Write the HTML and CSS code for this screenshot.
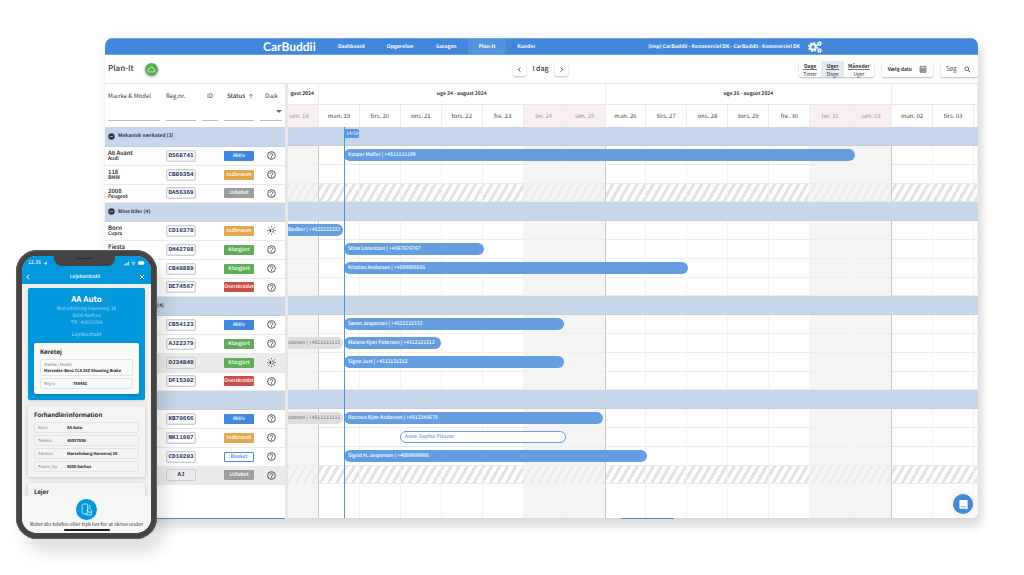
FILE: index.html
```html
<!DOCTYPE html>
<html lang="da">
<head>
<meta charset="utf-8">
<title>CarBuddii Plan-It</title>
<link rel="stylesheet" href="styles.css">
</head>
<body>
<svg class="defs" aria-hidden="true">
  <symbol id="help" viewBox="0 0 24 24"><circle cx="12" cy="12" r="10.3" fill="none" stroke="currentColor" stroke-width="2.2"/><path d="M8.6 9.6a3.4 3.4 0 1 1 5.2 2.9c-1.2.8-1.8 1.3-1.8 2.6" fill="none" stroke="currentColor" stroke-width="2.2"/><circle cx="12" cy="18" r="1.5"/></symbol>
  <symbol id="sun" viewBox="0 0 24 24"><path d="M11 7.500a4.500 4.500 0 0 0 0 9z"/><path d="M13 7.500a4.500 4.500 0 0 1 0 9M12 0v3.500M12 20.500V24M0 12h4M20 12h4M3 3.500l3.500 3.500M17.500 17l3.500 3.500M3 20.500L6.500 17M17.500 7l3.500-3.500" fill="none" stroke="currentColor" stroke-width="1.800"/></symbol>
  <symbol id="minus" viewBox="0 0 24 24"><circle cx="12" cy="12" r="11"/><path d="M7 12h10" stroke="#c5d7e8" stroke-width="2.500"/></symbol>
</svg>
<main class="app">
  <header class="topbar">
    <a class="logo" href="#">CarBuddii</a>
    <nav class="nav">
      <a href="#">Dashboard</a><a href="#">Opgørelser</a><a href="#">Garagen</a><a class="active" href="#">Plan-It</a><a href="#">Kunder</a>
    </nav>
    <span class="company">(Imp) CarBuddii - Kommerciel DK - CarBuddii - Kommerciel DK</span>
    <button class="gears" aria-label="Indstillinger"><svg viewBox="0 0 28 24"><g fill="none" stroke="#fff"><circle cx="10" cy="12" r="5.500" stroke-width="4"/><circle cx="10" cy="12" r="8.500" stroke-width="3" stroke-dasharray="3.700 2.970"/><circle cx="23" cy="5" r="2.700" stroke-width="2.200"/><circle cx="23" cy="5" r="4.300" stroke-width="1.500" stroke-dasharray="1.900 1.470"/><circle cx="23" cy="19" r="2.700" stroke-width="2.200"/><circle cx="23" cy="19" r="4.300" stroke-width="1.500" stroke-dasharray="1.900 1.470"/></g></svg></button>
  </header>

  <div class="toolbar">
    <div class="toolbar-left">
      <h1>Plan-It</h1>
      <button class="cloud" aria-label="Synkroniseret"><svg viewBox="0 0 24 24"><path d="M7 18.500a4.500 4.500 0 0 1-.5-9 6 6 0 0 1 11.500 1.500 3.800 3.800 0 0 1-.5 7.500z" fill="none" stroke="#fff" stroke-width="2"/></svg></button>
    </div>
    <div class="pager">
      <button aria-label="Forrige"><svg viewBox="0 0 24 24"><path d="M15 5l-7 7 7 7"/></svg></button>
      <span>I dag</span>
      <button aria-label="Næste"><svg viewBox="0 0 24 24"><path d="M9 5l7 7-7 7"/></svg></button>
    </div>
    <div class="toolbar-right">
      <div class="segments">
        <button><span>Dage</span><span>Timer</span></button>
        <button class="selected"><span>Uger</span><span>Dage</span></button>
        <button><span>Måneder</span><span>Uger</span></button>
      </div>
      <button class="date-button">Vælg dato <svg viewBox="0 0 24 24"><path d="M3 5h18v17H3zM3 9.500h18M7 1.500V5M17 1.500V5M3 14h18M3 18h18M9 10v12M15 10v12" fill="none" stroke="currentColor" stroke-width="1.600"/></svg></button>
      <label class="search"><input type="text" placeholder="Søg" aria-label="Søg"><svg viewBox="0 0 24 24"><circle cx="9.500" cy="9.500" r="6.500" fill="none" stroke="currentColor" stroke-width="2.500"/><path d="M14.500 14.500l7 7" stroke="currentColor" stroke-width="3"/></svg></label>
    </div>
  </div>

  <div class="planner">
    <section class="cars">
      <table>
        <colgroup><col class="c-model"><col class="c-reg"><col class="c-id"><col class="c-status"><col class="c-tyre"></colgroup>
        <thead>
          <tr>
            <th><label for="f1">Mærke &amp; Model</label><input id="f1" type="text"></th>
            <th><label for="f2">Reg.nr.</label><input id="f2" type="text"></th>
            <th><label class="inset" for="f3">ID</label><input id="f3" type="text"></th>
            <th class="sorted"><label class="near" for="f4">Status <svg viewBox="0 0 24 24"><path d="M12 22V4M5 11l7-7 7 7" fill="none" stroke="currentColor" stroke-width="2"/></svg></label><input id="f4" type="text"></th>
            <th><label class="inset" for="f5">Dæk</label><span class="picker"><select id="f5"><option></option></select></span></th>
          </tr>
        </thead>
        <tbody>
          <tr class="group"><td colspan="5"><div><svg><use href="#minus"/></svg>Mekanisk værksted (3)</div></td></tr>
          <tr><td><b>A6 Avant</b><small>Audi</small></td><td><span class="plate">DS68741</span></td><td></td><td><span class="badge blue">Aktiv</span></td><td><svg><use href="#help"/></svg></td></tr>
          <tr><td><b>118</b><small>BMW</small></td><td><span class="plate">CB89354</span></td><td></td><td><span class="badge orange">Indleveret</span></td><td><svg><use href="#help"/></svg></td></tr>
          <tr><td><b>2008</b><small>Peugeot</small></td><td><span class="plate">DA56369</span></td><td></td><td><span class="badge grey">Udløbet</span></td><td><svg><use href="#help"/></svg></td></tr>
          <tr class="group"><td colspan="5"><div><svg><use href="#minus"/></svg>Mine biler (4)</div></td></tr>
          <tr><td><b>Born</b><small>Cupra</small></td><td><span class="plate">CD10378</span></td><td></td><td><span class="badge orange">Indleveret</span></td><td><svg><use href="#sun"/></svg></td></tr>
          <tr><td><b>Fiesta</b><small>&nbsp;</small></td><td><span class="plate">DH42708</span></td><td></td><td><span class="badge green">Klargjort</span></td><td><svg><use href="#help"/></svg></td></tr>
          <tr><td></td><td><span class="plate">CB48889</span></td><td></td><td><span class="badge green">Klargjort</span></td><td><svg><use href="#help"/></svg></td></tr>
          <tr><td></td><td><span class="plate">DE74567</span></td><td></td><td><span class="badge red">Overskredet</span></td><td><svg><use href="#help"/></svg></td></tr>
          <tr class="group tail"><td colspan="5"><div>(4)</div></td></tr>
          <tr><td></td><td><span class="plate">CB54123</span></td><td></td><td><span class="badge blue">Aktiv</span></td><td><svg><use href="#help"/></svg></td></tr>
          <tr><td></td><td><span class="plate">AJ22379</span></td><td></td><td><span class="badge green">Klargjort</span></td><td><svg><use href="#help"/></svg></td></tr>
          <tr class="hover"><td></td><td><span class="plate">OJ34849</span></td><td></td><td><span class="badge green">Klargjort</span></td><td><svg><use href="#sun"/></svg></td></tr>
          <tr><td></td><td><span class="plate">DF15302</span></td><td></td><td><span class="badge red">Overskredet</span></td><td><svg><use href="#help"/></svg></td></tr>
          <tr class="group"><td colspan="5"></td></tr>
          <tr><td></td><td><span class="plate">KB70666</span></td><td></td><td><span class="badge blue">Aktiv</span></td><td><svg><use href="#help"/></svg></td></tr>
          <tr><td></td><td><span class="plate">NK11007</span></td><td></td><td><span class="badge orange">Indleveret</span></td><td><svg><use href="#help"/></svg></td></tr>
          <tr><td></td><td><span class="plate">CD10203</span></td><td></td><td><span class="badge outline">Booket</span></td><td><svg><use href="#help"/></svg></td></tr>
          <tr class="hover"><td></td><td><span class="plate">AJ</span></td><td></td><td><span class="badge grey">Udløbet</span></td><td><svg><use href="#help"/></svg></td></tr>
        </tbody>
      </table>
      <div class="scroll-line"></div>
    </section>

    <section class="timeline">
      <div class="weeks"><span class="cut">gust 2024</span><span>uge 34 - august 2024</span><span>uge 35 - august 2024</span><span></span></div>
      <div class="days">
        <span class="off cut">søn. 18</span><span>man. 19</span><span>tirs. 20</span><span>ons. 21</span><span>tors. 22</span><span>fre. 23</span><span class="off">lør. 24</span><span class="off">søn. 25</span><span>man. 26</span><span>tirs. 27</span><span>ons. 28</span><span>tors. 29</span><span>fre. 30</span><span class="off">lør. 31</span><span class="off">søn. 01</span><span>man. 02</span><span>tirs. 03</span><span></span>
      </div>
      <div class="chart">
        <div class="columns"><i class="off end"></i><i></i><i></i><i></i><i></i><i></i><i class="off"></i><i class="off end"></i><i></i><i></i><i></i><i></i><i></i><i class="off"></i><i class="off end"></i><i></i><i></i><i></i></div>
        <div class="rows">
          <div class="row group"></div>
          <div class="row"><div class="bar" style="margin-left:8.1%;width:74.1%">Kasper Møller | +4511111199</div></div>
          <div class="row"></div>
          <div class="row striped"></div>
          <div class="row group"></div>
          <div class="row"><div class="bar cut" style="width:8%">Bødker | +4522222222</div></div>
          <div class="row"><div class="bar" style="margin-left:8.1%;width:20.3%">Stine Lorentzen | +4567676767</div></div>
          <div class="row"><div class="bar" style="margin-left:8.1%;width:49.9%">Kristian Andersen | +4599999555</div></div>
          <div class="row"></div>
          <div class="row group"></div>
          <div class="row"><div class="bar" style="margin-left:8.1%;width:31.9%">Søren Jespersen | +4522222333</div></div>
          <div class="row"><div class="bar cut past" style="width:8%">ustesen | +4511111111</div><div class="bar" style="margin-left:.1%;width:14.1%">Malene Kjær Petersen | +4512121212</div></div>
          <div class="row"><div class="bar" style="margin-left:8.1%;width:31.9%">Signe Just | +4512121212</div></div>
          <div class="row"></div>
          <div class="row group"></div>
          <div class="row"><div class="bar cut past" style="width:8%">ustesen | +4511111111</div><div class="bar" style="margin-left:.1%;width:37.5%">Rasmus Kjær Andersen | +4512345678</div></div>
          <div class="row"><div class="bar draft" style="margin-left:16.2%;width:24.1%">Anne-Sophie Plesner</div></div>
          <div class="row"><div class="bar" style="margin-left:8.1%;width:43.9%">Sigrid H. Jespersen | +4599999998</div></div>
          <div class="row striped"></div>
        </div>
        <div class="now" style="left:8.1%"><span>14:50</span></div>
      </div>
      <div class="scroll-track"><div class="scroll-thumb"></div></div>
    </section>
  </div>
  <button class="chat" aria-label="Chat"><svg viewBox="0 0 24 24"><path d="M5 2h14a2 2 0 0 1 2 2v19l-4-2H5a2 2 0 0 1-2-2V4a2 2 0 0 1 2-2z" fill="#fff"/><path d="M6.500 15.500q5.500 4 11 0" fill="none" stroke="#4287d9" stroke-width="1.500"/></svg></button>
</main>

<aside class="phone">
  <div class="screen">
    <header class="phone-head">
      <div class="status"><span>12.35 <svg viewBox="0 0 24 24"><path d="M2 12L21 3l-8 18-2-8z" fill="#fff"/></svg></span><span class="signals"><svg viewBox="0 0 24 24"><path d="M1 15h4v6H1zM7 12h4v9H7zM13 8h4v13h-4zM19 4h4v17h-4z" fill="#fff"/></svg><svg viewBox="0 0 24 24"><path d="M2 9q10-8 20 0M6 14q6-5 12 0" fill="none" stroke="#fff" stroke-width="3"/><circle cx="12" cy="18.500" r="2.500" fill="#fff"/></svg><svg class="wide" viewBox="0 0 30 24"><rect x="1" y="5" width="25" height="14" rx="4" fill="#fff"/><path d="M28.500 10v4" stroke="#fff" stroke-width="2"/></svg></span></div>
      <div class="title"><button aria-label="Tilbage"><svg viewBox="0 0 24 24"><path d="M16 3l-9 9 9 9"/></svg></button><span>Lejekontrakt</span><button aria-label="Luk"><svg viewBox="0 0 24 24"><path d="M4 4l16 16M20 4L4 20"/></svg></button></div>
    </header>
    <div class="contract">
      <section class="dealer">
        <h2>AA Auto</h2>
        <p>Marselisborg Havnevej 38<br>8000 Aarhus<br>Tlf.: 40937096</p>
        <p class="kind">Lejekontrakt</p>
        <div class="card">
          <h3>Køretøj</h3>
          <div class="field stacked"><span>Mærke / Model</span><b>Mercedes-Benz CLS 250 Shooting Brake</b></div>
          <div class="field"><span>Reg nr.</span><b>798465</b></div>
        </div>
      </section>
      <section class="card info">
        <h3>Forhandlerinformation</h3>
        <div class="field"><span>Navn</span><b>AA Auto</b></div>
        <div class="field"><span>Telefon</span><b>40937096</b></div>
        <div class="field"><span>Adresse</span><b>Marselisborg Havnevej 38</b></div>
        <div class="field"><span>Postnr./by</span><b>8000 Aarhus</b></div>
      </section>
      <section class="card info"><h3>Lejer</h3></section>
    </div>
    <footer class="sign">
      <button aria-label="Roter"><svg viewBox="0 0 24 24"><g fill="none" stroke="#fff" stroke-width="1.300"><rect x="4" y="2" width="10" height="18" rx="2"/><path d="M14 9h3l4 4v8a1 1 0 0 1-1 1h-9v-2M16 4q3 0 3 4M12 14q3-1 4 3h4"/></g></svg></button>
      <span>Roter din telefon eller tryk her for at skrive under</span>
      <i></i>
    </footer>
  </div>
  <div class="notch"></div>
</aside>
</body>
</html>
```
FILE: styles.css
```css
* { box-sizing: border-box; }

body {
  margin: 0;
  min-height: 100vh;
  background: #fff;
  color: #333;
  font: 6px/8px "Noto Sans CJK JP", "Noto Sans", sans-serif;
  text-rendering: geometricPrecision;
  position: relative;
  overflow: hidden;
}

button, input, select {
  font: inherit;
  color: inherit;
  border: 0;
  padding: 0;
  margin: 0;
  background: none;
  min-width: 0;
}

a { color: inherit; text-decoration: none; }
svg { display: block; fill: currentColor; }
.defs { display: none; }
h1, h2, h3, p { margin: 0; }

/* Application window */
.app {
  position: relative;
  margin: 38px 46px 0 105px;
  background: #fff;
  border-radius: 8px;
  overflow: clip;
  box-shadow: 4px 8px 10px rgba(0, 0, 0, .12), 0 0 14px rgba(0, 0, 0, .05);
}

.topbar {
  display: flex;
  align-items: center;
  height: 17px;
  padding: 0 156px 0 158px;
  background: #4287d9;
  border-top: 1px solid #71a4e2;
  border-bottom: 1px solid #71a4e2;
  color: #fff;
  font-size: 5px;
  font-weight: 700;
  white-space: nowrap;
}

.logo { font: 700 12px/14px Lato, sans-serif; width: 64px; }
.nav { display: flex; align-self: stretch; }
.nav a { display: flex; align-items: center; padding: 0 11px; }
.nav .active { background: #5393dd; }
.company { margin-left: auto; }
.gears { margin-left: 8px; }
.gears svg { width: 14px; height: 12px; }

.toolbar {
  display: grid;
  grid-template-columns: 1fr auto 1fr;
  align-items: center;
  height: 29px;
  border-bottom: 1px solid #e4e4e4;
}

.toolbar-left { display: flex; align-items: center; gap: 11px; padding-left: 3px; }
h1 { font-size: 8px; line-height: 12px; font-weight: 500; color: #2f3542; }
.cloud { width: 13px; height: 13px; border-radius: 50%; background: #5aad54; display: grid; place-items: center; box-shadow: 0 1px 3px rgba(0, 0, 0, .3); }
.cloud svg { width: 9px; height: 9px; }

.pager { display: flex; align-items: center; gap: 6px; padding-right: 2px; font-size: 7px; font-weight: 500; }
.pager button { width: 13px; height: 13px; display: grid; place-items: center; border-radius: 2px; box-shadow: 0 1px 2px rgba(0, 0, 0, .25); }
.pager svg { width: 7px; height: 7px; fill: none; stroke: #222; stroke-width: 3; }

.toolbar-right { display: flex; justify-content: flex-end; gap: 8px; font-size: 5px; }
.segments, .date-button, .search { height: 16px; border-radius: 2px; box-shadow: 0 1px 2px rgba(0, 0, 0, .28); }
.segments { display: flex; }
.segments button { display: flex; flex-direction: column; justify-content: center; min-width: 22px; padding: 0 4px; line-height: 7px; }
.segments button + button { border-left: 1px solid #e8e8e8; }
.segments span:first-child { border-bottom: 1px solid #777; font-weight: 700; }
.segments .selected { background: #e3eaf2; }
.date-button { display: flex; align-items: center; gap: 7px; padding: 0 6px; font-weight: 700; }
.date-button svg { width: 8px; height: 8px; }
.search { display: flex; align-items: center; width: 37px; padding: 0 7px 0 5px; font-size: 6px; }
.search input { flex: 1; width: 10px; }
.search input::placeholder { color: #555; opacity: 1; }
.search svg { width: 7px; height: 7px; }

/* Planner */
.planner { display: flex; }
.cars { display: flex; flex-direction: column; width: 183px; flex: none; border-right: 3px solid #e6e6e6; }
table { width: 180px; table-layout: fixed; border-collapse: collapse; }
.c-model { width: 58px; }
.c-reg, .c-status { width: 36px; }
.c-id { width: 22px; }
.c-tyre { width: 28px; }
th { height: 43px; padding: 8px 3px 6px; text-align: left; vertical-align: top; font-weight: 400; white-space: nowrap; }
th label { display: flex; align-items: center; gap: 3px; }
th label svg { width: 6px; height: 6px; }
th label.inset { padding-left: 5px; }
th label.near { padding-left: 3px; }
th input, .picker { display: block; width: 100%; height: 13px; margin-top: 8px; border-bottom: 1px solid #bbb; }
th.sorted { font-weight: 500; }
.picker { position: relative; }
.picker select { width: 100%; height: 12px; appearance: none; }
.picker::after { content: ""; position: absolute; right: 0; top: 2px; border: 3px solid transparent; border-top-color: #666; border-bottom: 0; }

tbody tr { height: 19px; border-bottom: 1px solid #eaeaea; }
tbody tr:has(+ .group), tbody tr:last-child { height: 18px; }
tbody tr.group { background: #c5d7e8; border-bottom-color: #c5cdd5; }
.group div { display: flex; align-items: center; gap: 3px; color: #2f3542; font-size: 5px; font-weight: 700; }
.group svg { width: 7px; height: 7px; }
.tail div { padding-left: 49px; }
tr.hover { background: #ebebeb; }
td { padding: 0 3px; }
td b, td small { display: block; font-size: 6px; line-height: 7px; font-weight: 500; color: #111; }
td small { font-size: 5px; line-height: 6px; }
td > svg { width: 9px; height: 9px; margin-left: 7px; }

.plate {
  display: block;
  height: 12px;
  border: 1px solid #cfcfcf;
  box-shadow: inset 0 0 0 1px #ececec;
  border-radius: 2px;
  font: 700 6px/10px "Liberation Mono", monospace;
  text-align: center;
  color: #1c3766;
}

.badge { display: block; height: 10px; border-radius: 1px; font-size: 5px; line-height: 10px; font-weight: 500; text-align: center; color: #fff; white-space: nowrap; }
.blue { background: #4287d9; }
.orange { background: #e4a64e; }
.green { background: #5fad56; }
.red { background: #c94f48; }
.grey { background: #9d9d9d; }
.outline { border: 1px solid #4287d9; line-height: 8px; color: #4287d9; background: #fff; }
.scroll-line { margin-top: auto; height: 1px; background: #4287d9; }

/* Timeline */
.timeline { flex: 1; min-width: 0; }
.weeks { display: grid; grid-template-columns: 31fr 287fr 287fr 86fr; height: 21px; font-size: 5px; line-height: 20px; font-weight: 700; text-align: center; white-space: nowrap; border-bottom: 1px solid #e8e8e8; }
.weeks span { min-width: 0; border-right: 1px solid #eee; }
.weeks .cut { text-align: right; padding-right: 4px; }
.days, .columns { display: grid; grid-template-columns: 31fr repeat(16, 41fr) 4fr; }
.days { height: 22px; line-height: 21px; text-align: center; color: #444; white-space: nowrap; }
.days span { border-right: 1px solid #eee; }
.days .cut { text-align: left; padding-left: 1px; }
.days .off { background: #f9efef; color: #999; }

.chart { position: relative; display: grid; height: 391px; }
.columns, .rows { grid-area: 1 / 1; min-width: 0; }
.columns { z-index: 1; }
.columns i { border-right: 1px solid #f3f3f3; }
.columns .off { background: rgba(241, 241, 241, .7); }
.columns .end { border-right-color: #c8c8c8; }
.row { display: flex; align-items: center; height: 19px; border-bottom: 1px solid #ececec; }
.row:has(+ .group), .row:last-child { height: 18px; }
.row.group { position: relative; z-index: 2; background: #c5d7e8; border-bottom-color: #c5cdd5; }
.striped { background: repeating-linear-gradient(120deg, #e3e3e3 0 3px, #fff 3px 7px); }

.bar {
  position: relative;
  z-index: 2;
  flex: none;
  height: 12px;
  padding: 0 4px;
  border-radius: 6px;
  background: #669de0;
  color: #fff;
  font-size: 5px;
  line-height: 12px;
  font-weight: 500;
  white-space: nowrap;
}
.bar.cut { display: flex; justify-content: flex-end; overflow: hidden; padding: 0 3px 0 0; border-radius: 0 6px 6px 0; }
.past { background: #dedede; color: #888; }
.draft { background: #fff; border: 1px solid #669de0; line-height: 10px; color: #669de0; }

.now { position: absolute; z-index: 3; top: 0; bottom: 0; border-left: 1px solid #4f94de; }
.now span { display: block; margin-top: 2px; padding: 0 1px; border-radius: 0 2px 2px 0; background: #5596dd; color: #fff; font-size: 5px; line-height: 9px; }
.scroll-track { height: 1px; padding: 0 304px 0 333px; background: #d8d8d8; }
.scroll-thumb { height: 1px; background: #4287d9; }

.chat { position: absolute; right: 5px; bottom: 5px; width: 20px; height: 20px; display: grid; place-items: center; border-radius: 50%; background: #4287d9; box-shadow: 0 0 8px rgba(0, 0, 0, .12); }
.chat svg { width: 11px; height: 11px; }

/* Phone */
.phone {
  position: absolute;
  left: 16px;
  top: 250px;
  z-index: 5;
  width: 141px;
  padding: 6px;
  border-radius: 21px;
  background: #444;
  box-shadow: inset 0 0 0 1px #5c5c5c, 8px 14px 16px rgba(0, 0, 0, .12);
}
.screen { height: 277px; display: flex; flex-direction: column; overflow: hidden; border-radius: 15px; background: #f1f1f1; }
.notch { position: absolute; left: 38px; top: 5px; width: 61px; height: 11px; border-radius: 0 0 8px 8px; background: #444; }
.notch::after { content: ""; position: absolute; left: 23px; top: 3px; width: 15px; height: 1px; background: #2c2c2c; }
.phone-head { flex: none; height: 28px; padding: 3px 6px 0; background: #0398dc; color: #fff; }
.status, .title, .signals, .status span { display: flex; align-items: center; }
.status, .title { justify-content: space-between; }
.status { font-size: 5px; line-height: 8px; font-weight: 500; }
.status > span { gap: 2px; }
.status svg { width: 5px; height: 5px; }
.status .wide { width: 7px; height: 6px; }
.title { height: 16px; padding-top: 4px; font-size: 5px; font-weight: 500; }
.title svg { width: 6px; height: 6px; fill: none; stroke: #fff; stroke-width: 4; }
.title button:first-child { margin-left: -3px; }
.contract { flex: 1; min-height: 0; overflow: hidden; padding: 4px 6px 0; display: flex; flex-direction: column; gap: 6px; }
.dealer { flex: none; padding: 7px 6px 6px; border-radius: 2px; background: #0398dc; color: #a9def5; text-align: center; font-size: 5px; line-height: 7px; box-shadow: 0 1px 3px rgba(0, 0, 0, .15); }
h2 { font-size: 8px; line-height: 10px; color: #fff; }
.kind { padding: 5px 0 5px; }
.card { padding: 4px 6px 5px; border-radius: 2px; background: #f4f4f4; color: #222; text-align: left; box-shadow: 0 1px 4px rgba(0, 0, 0, .18); }
.dealer .card { background: #fafafa; }
h3 { font-size: 6px; line-height: 10px; font-weight: 700; margin-bottom: 2px; }
.field { display: flex; align-items: center; height: 11px; padding: 0 3px; border: 1px solid #e4e4e4; border-radius: 2px; font-size: 4px; line-height: 6px; white-space: nowrap; }
.field + .field { margin-top: 2px; }
.field span { width: 29px; color: #777; }
.stacked { flex-direction: column; align-items: flex-start; justify-content: center; height: 17px; }
.info { flex: none; }
.sign { flex: none; display: flex; flex-direction: column; align-items: center; height: 37px; padding-top: 3px; background: #f6f6f6; font-size: 5px; line-height: 9px; font-weight: 400; white-space: nowrap; }
.sign button { width: 21px; height: 21px; border-radius: 50%; background: #0398dc; display: grid; place-items: center; }
.sign svg { width: 13px; height: 13px; }
.sign i { width: 46px; height: 2px; border-radius: 1px; background: #222; }
```
